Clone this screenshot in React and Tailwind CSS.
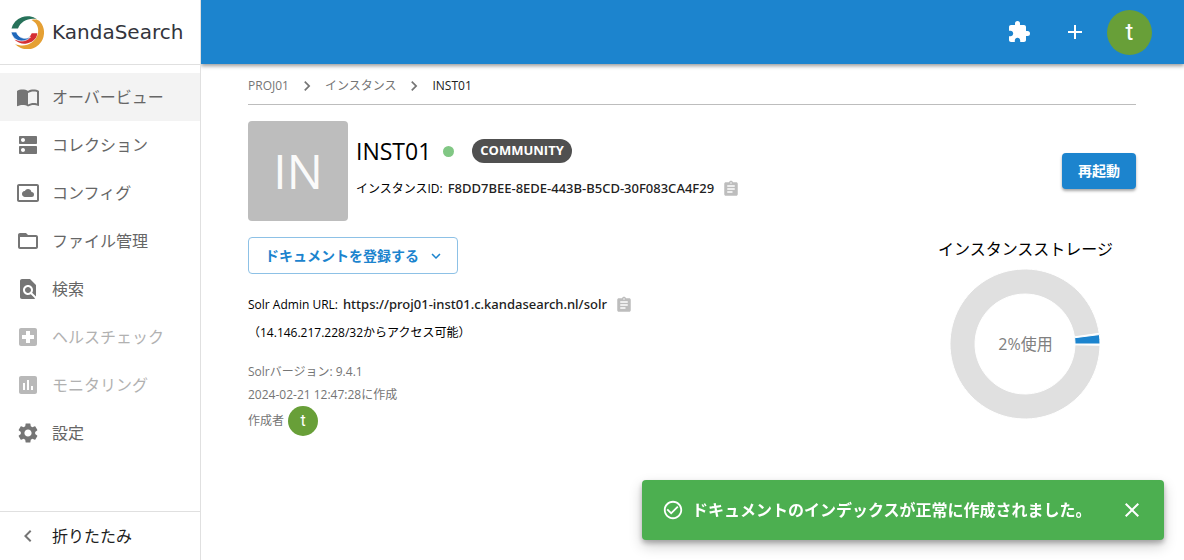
import { useState } from "react";
import {
  MdAdd,
  MdAssignment,
  MdCheckCircleOutline,
  MdClose,
  MdDns,
  MdExpandMore,
  MdExtension,
  MdFindInPage,
  MdFolderOpen,
  MdImportContacts,
  MdLocalHospital,
  MdNavigateBefore,
  MdNavigateNext,
  MdPoll,
  MdSettings,
  MdSettingsSystemDaydream,
} from "react-icons/md";

const NAV_ITEMS = [
  { label: "オーバービュー", icon: MdImportContacts, active: true },
  { label: "コレクション", icon: MdDns },
  { label: "コンフィグ", icon: MdSettingsSystemDaydream },
  { label: "ファイル管理", icon: MdFolderOpen },
  { label: "検索", icon: MdFindInPage },
  { label: "ヘルスチェック", icon: MdLocalHospital, disabled: true },
  { label: "モニタリング", icon: MdPoll, disabled: true },
  { label: "設定", icon: MdSettings },
];

const STORAGE_USED = 2;

function Logo() {
  return (
    <a href="#" className="flex h-16 items-center gap-2 px-[11px] text-[#33343c]">
      <svg viewBox="0 0 33 33" className="size-[33px] shrink-0" aria-hidden="true">
        <path
          fill="#e5a034"
          d="M20.500 4C24.500 3 27 3.800 28.500 5A16.500 16.500 0 0 1 4 28C14 32 23.500 27.500 26.500 19C28.500 12 26 7 20.500 4Z"
        />
        <path
          fill="#27725a"
          d="M0.500 12.500A16.500 16.500 0 0 1 26 3.200C17.500 1.500 10 5 7 12.500Z"
        />
        <path
          fill="#d52f34"
          d="M26.300 17.300H20.700C18.500 23 12.500 26 3.500 23.700C7.500 27 11 28.200 14.500 27.700C20.500 27 25.800 23.500 26.300 17.300Z"
        />
        <path
          fill="#1f68bb"
          stroke="#fff"
          strokeWidth="0.7"
          d="M0 16H5.500C7 21.500 13 24 19.500 21C15 26.500 3 27.500 0 16Z"
        />
      </svg>
      <span className="font-['DejaVu_Sans',sans-serif] text-xl leading-8">KandaSearch</span>
    </a>
  );
}

function NavItem({ label, icon: Icon, active, disabled }) {
  return (
    <li>
      <a
        href="#"
        aria-current={active ? "page" : undefined}
        aria-disabled={disabled}
        className={`flex h-12 items-center gap-3 px-4 text-[#666666] ${
          active ? "bg-[#f3f3f3]" : ""
        } ${disabled ? "opacity-50" : ""}`}
      >
        <Icon className="size-6 shrink-0 text-[#757575]" />
        <span>{label}</span>
      </a>
    </li>
  );
}

function Sidebar() {
  return (
    <aside className="z-20 flex w-[201px] shrink-0 flex-col border-r border-[#e0e0e0] bg-white">
      <div className="border-b border-[#e0e0e0]">
        <Logo />
      </div>
      <nav className="flex-1 py-2">
        <ul>
          {NAV_ITEMS.map((item) => (
            <NavItem key={item.label} {...item} />
          ))}
        </ul>
      </nav>
      <button
        type="button"
        className="flex h-[49px] items-center gap-3 border-t border-[#e0e0e0] px-4 text-[#212121]"
      >
        <MdNavigateBefore className="size-6 text-[#757575]" />
        折りたたみ
      </button>
    </aside>
  );
}

function TopBar() {
  return (
    <header className="z-10 flex h-16 shrink-0 items-center justify-end bg-[#1c84ce] px-8 text-white shadow-[0_2px_4px_rgba(0,0,0,0.4)]">
      <button type="button" aria-label="拡張機能" className="p-4">
        <MdExtension className="size-6" />
      </button>
      <button type="button" aria-label="追加" className="p-4">
        <MdAdd className="size-6" />
      </button>
      <button
        type="button"
        aria-label="アカウント"
        className="ml-1 flex size-[45px] items-center justify-center rounded-full bg-[#689f38] font-[Roboto,sans-serif] text-2xl"
      >
        t
      </button>
    </header>
  );
}

function Breadcrumbs() {
  return (
    <nav className="flex h-[41px] items-center gap-2 border-b border-[#bdbdbd] pt-[3px] text-xs text-[#757575]">
      <a href="#">PROJ01</a>
      <MdNavigateNext className="size-5" />
      <a href="#">インスタンス</a>
      <MdNavigateNext className="size-5" />
      <span className="text-[#212121]">INST01</span>
    </nav>
  );
}

function CopyButton() {
  return (
    <button type="button" aria-label="コピー" className="text-[#bdbdbd]">
      <MdAssignment className="size-[18px]" />
    </button>
  );
}

function point(radius, degrees) {
  const rad = (degrees * Math.PI) / 180;
  return `${75 + radius * Math.cos(rad)} ${75 - radius * Math.sin(rad)}`;
}

// Ring segment, angles counted anticlockwise from three o'clock
function arc(start, end) {
  const large = end - start > 180 ? 1 : 0;
  return `M${point(75, start)}A75 75 0 ${large} 0 ${point(75, end)}L${point(50, end)}A50 50 0 ${large} 1 ${point(50, start)}Z`;
}

function StorageChart() {
  const used = (STORAGE_USED / 100) * 360;
  return (
    <figure className="flex flex-col items-center text-black">
      <figcaption className="leading-6">インスタンスストレージ</figcaption>
      <div className="relative mt-2">
        <svg viewBox="0 0 150 150" className="size-[150px]" aria-hidden="true">
          <path d={arc(0, used)} fill="#1c84ce" stroke="#fff" />
          <path d={arc(used + 1, 359)} fill="#e0e0e0" stroke="#fff" />
        </svg>
        <span className="absolute inset-0 flex items-center justify-center text-[#808080]">
          {STORAGE_USED}%使用
        </span>
      </div>
    </figure>
  );
}

function InstanceHeader() {
  return (
    <section className="mt-4 flex items-center gap-2">
      <div className="flex size-[100px] shrink-0 items-center justify-center rounded bg-[#bdbdbd] text-5xl text-[#fafafa]">
        IN
      </div>
      <div className="flex-1 pb-2">
        <div className="flex h-8 items-center gap-3">
          <h1 className="text-[23px] leading-8 text-black">INST01</h1>
          <span className="size-[11px] rounded-full bg-[#81c784]" />
          <span className="ml-1.5 flex h-6 items-center rounded-full bg-[#505050] px-2 text-[13px] font-bold text-white">
            COMMUNITY
          </span>
        </div>
        <div className="mt-3 flex h-5 items-center text-xs text-black">
          <span>インスタンスID:</span>
          <span className="mr-2 ml-[5px] font-['Noto_Sans',sans-serif] text-[13px] font-medium text-[#212121]">
            F8DD7BEE-8EDE-443B-B5CD-30F083CA4F29
          </span>
          <CopyButton />
        </div>
      </div>
      <button
        type="button"
        className="rounded bg-[#1c84ce] px-4 py-2 text-sm font-bold text-white shadow-[0_2px_3px_rgba(0,0,0,0.35)]"
      >
        再起動
      </button>
    </section>
  );
}

function InstanceDetails() {
  return (
    <section className="flex items-start justify-between pt-4">
      <div className="text-xs text-black">
        <button
          type="button"
          className="flex h-[37px] items-center gap-2 rounded border border-[#8dc1e6] pr-3 pl-4 text-sm leading-5 font-bold text-[#1c84ce]"
        >
          ドキュメントを登録する
          <MdExpandMore className="size-[18px]" />
        </button>
        <div className="mt-[19px] flex h-6 items-center">
          <span>Solr Admin URL:</span>
          <a
            href="#"
            className="mr-2 ml-[5px] font-['Noto_Sans',sans-serif] text-[13px] font-medium text-[#212121]"
          >
            https://proj01-inst01.c.kandasearch.nl/solr
          </a>
          <CopyButton />
        </div>
        <p className="mt-1 leading-6">（14.146.217.228/32からアクセス可能）</p>
        <div className="mt-[15px] text-[#757575]">
          <p className="leading-[23px]">Solrバージョン: 9.4.1</p>
          <p className="leading-[23px]">2024-02-21 12:47:28に作成</p>
          <p className="flex items-center gap-1">
            作成者
            <span className="flex size-[30px] items-center justify-center rounded-full bg-[#689f38] font-[Roboto,sans-serif] text-base text-white">
              t
            </span>
          </p>
        </div>
      </div>
      <div className="pr-[23px]">
        <StorageChart />
      </div>
    </section>
  );
}

function Toast({ onClose }) {
  return (
    <div
      role="status"
      className="fixed right-5 bottom-5 z-30 flex h-[60px] w-[522px] items-center rounded bg-[#4caf50] px-5 text-white shadow-[0_3px_5px_rgba(0,0,0,0.25),0_6px_14px_rgba(0,0,0,0.2)]"
    >
      <MdCheckCircleOutline className="mr-2 size-[22px] shrink-0" />
      <p className="flex-1 font-bold whitespace-nowrap">
        ドキュメントのインデックスが正常に作成されました。
      </p>
      <button type="button" aria-label="閉じる" onClick={onClose}>
        <MdClose className="size-6" />
      </button>
    </div>
  );
}

export default function App() {
  const [toastOpen, setToastOpen] = useState(true);

  return (
    <div className="flex min-h-screen bg-white font-['Open_Sans','Noto_Sans_CJK_JP',sans-serif] text-base">
      <Sidebar />
      <div className="flex min-w-0 flex-1 flex-col">
        <TopBar />
        <main className="flex-1 pr-12 pl-[47px]">
          <Breadcrumbs />
          <InstanceHeader />
          <InstanceDetails />
        </main>
      </div>
      {toastOpen && <Toast onClose={() => setToastOpen(false)} />}
    </div>
  );
}
